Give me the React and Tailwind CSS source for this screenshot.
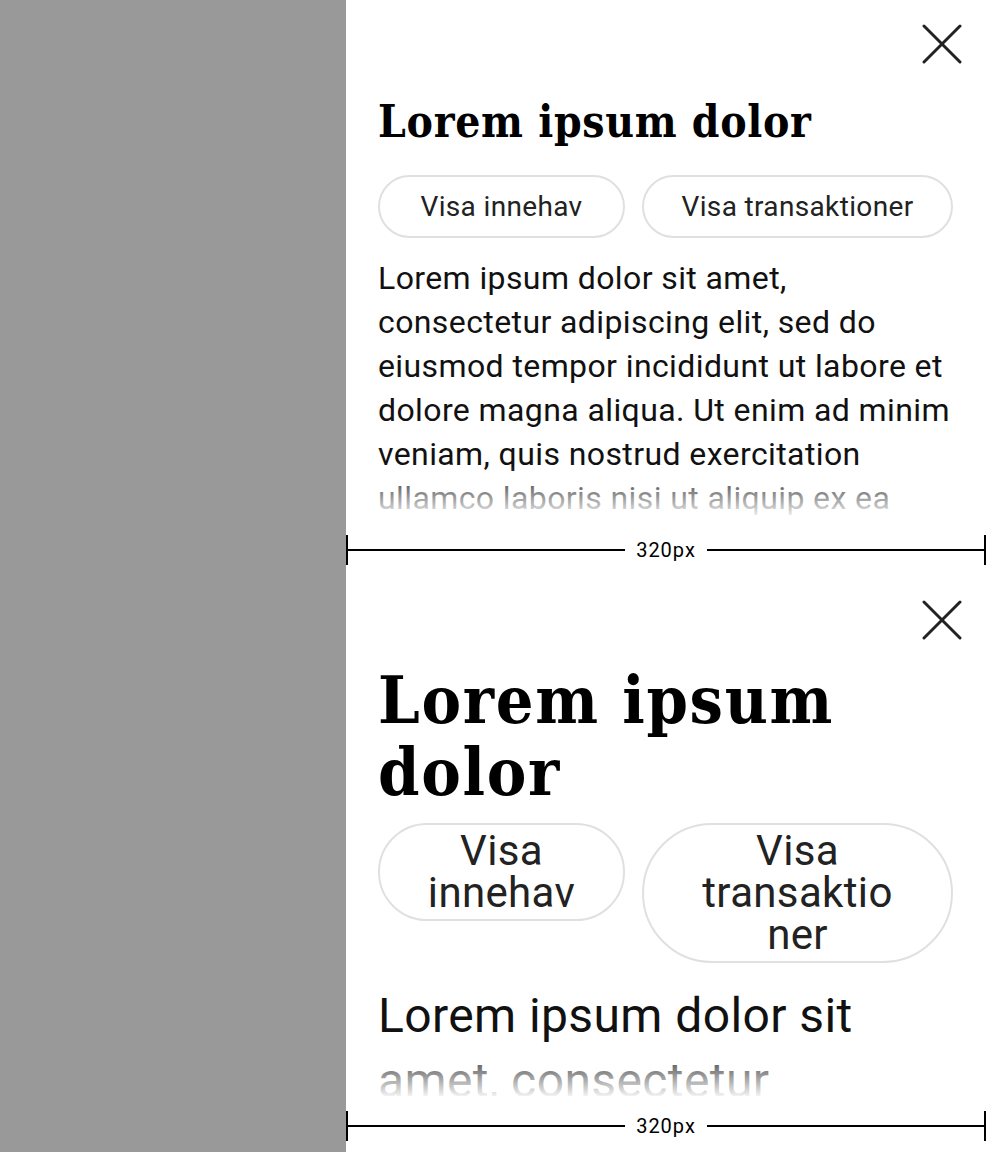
const excerpt = {
  small:
    'Lorem ipsum dolor sit amet, consectetur adipiscing elit, sed do eiusmod tempor incididunt ut labore et dolore magna aliqua. Ut enim ad minim veniam, quis nostrud exercitation ullamco laboris nisi ut aliquip ex ea',
  big: 'Lorem ipsum dolor sit amet, consectetur',
};

const slab = { fontFamily: '"DejaVu Serif Condensed", "DejaVu Serif", serif' };
const sans = { fontFamily: 'Roboto, "Liberation Sans", sans-serif' };

function CloseIcon() {
  return (
    <svg width="40" height="40" viewBox="0 0 40 40" fill="none" stroke="#222" strokeWidth="3" strokeLinecap="round">
      <path d="M2 2L38 38M38 2L2 38" />
    </svg>
  );
}

function Panel({ big }) {
  const btn = big
    ? 'text-[42px] leading-[42px] pt-[5px] pb-[5px] px-[40px]'
    : 'text-[28px] leading-[32px] pt-[14px] pb-[13px] px-[30px]';

  return (
    <section className="h-[576px] flex flex-col bg-white" style={sans}>
      <div className="flex-1 min-h-0 overflow-hidden px-[32px] pt-[24px]">
        <div className="flex justify-end -mr-[8px]">
          <button className="block" aria-label="Stäng">
            <CloseIcon />
          </button>
        </div>

        {big ? (
          <h2 className="mt-[24px] text-[66px] leading-[72px] tracking-[1.7px] font-bold text-black" style={slab}>
            Lorem ipsum dolor
          </h2>
        ) : (
          <h2 className="mt-[34px] text-[44px] leading-[48px] tracking-[0.7px] font-bold text-black" style={slab}>
            Lorem ipsum dolor
          </h2>
        )}

        <div className={`flex items-start gap-[17px] ${big ? 'mt-[15px]' : 'mt-[29px]'}`}>
          <button className={`w-[247px] shrink-0 rounded-full border-2 border-[#e0e0e0] text-[#222] tracking-[0.35px] ${btn}`}>
            Visa innehav
          </button>
          <button className={`w-[311px] shrink-0 rounded-full border-2 border-[#e0e0e0] text-[#222] tracking-[0.35px] ${btn}`}>
            Visa transaktio<wbr />ner
          </button>
        </div>

        <div
          className={`relative overflow-hidden ${
            big ? 'mt-[20px] max-h-[116px]' : 'mt-[18px] max-h-[264px]'
          }`}
        >
          <p className={`text-[#111] tracking-[0.4px] ${big ? 'text-[48px] leading-[65px]' : 'text-[32px] leading-[44px]'}`}>
            {big ? excerpt.big : excerpt.small}
          </p>
          <div className="pointer-events-none absolute inset-x-0 bottom-0 h-[54px] bg-gradient-to-b from-white/0 to-white" />
        </div>
      </div>

      <div className="mt-[15px] mb-[11px] flex h-[30px] items-center">
        <div className="h-[30px] w-[2px] bg-black" />
        <div className="h-[2px] flex-1 bg-black" />
        <span className="px-[11px] text-[20px] leading-none tracking-[1px] text-black">320px</span>
        <div className="h-[2px] flex-1 bg-black" />
        <div className="h-[30px] w-[2px] bg-black" />
      </div>
    </section>
  );
}

export default function App() {
  return (
    <div className="flex h-[1152px] w-full overflow-hidden">
      <div className="w-[346px] shrink-0 bg-[#999999]" />
      <div className="flex flex-1 flex-col">
        <Panel />
        <Panel big />
      </div>
    </div>
  );
}
